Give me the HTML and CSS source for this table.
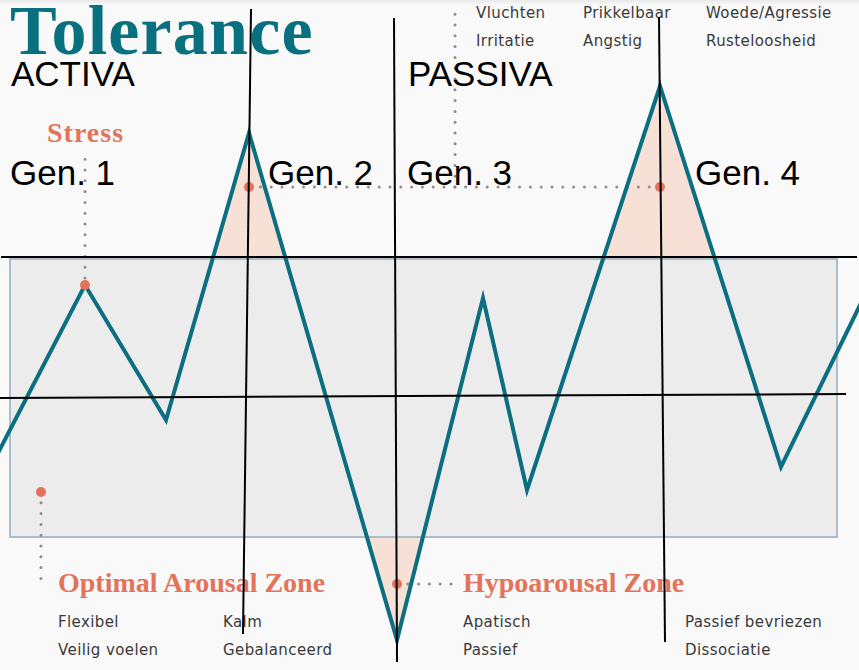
FILE: index.html
```html
<!DOCTYPE html>
<html lang="nl">
<head>
<meta charset="utf-8">
<title>Tolerance</title>
<link rel="stylesheet" href="styles.css">
</head>
<body>
<main class="canvas">
  <svg class="layer" width="859" height="670" viewBox="0 0 859 670" aria-hidden="true">
    <rect x="10" y="259" width="827" height="278" fill="#ececec" stroke="#aabdcc" stroke-width="2"/>
    <g fill="#f7e0d5">
      <polygon points="213,258 249,133 285.5,258"/>
      <polygon points="603.4,258 660,86 714.6,258"/>
      <polygon points="367,538 397,640 422.9,538"/>
    </g>
    <g stroke="#8d8d8d" stroke-width="3" stroke-linecap="round" stroke-dasharray="0 10.8" fill="none">
      <line x1="85" y1="278" x2="85" y2="152"/>
      <line x1="660" y1="187" x2="249" y2="187"/>
      <line x1="455" y1="187" x2="455" y2="6"/>
      <line x1="41" y1="492" x2="41" y2="588"/>
      <line x1="397" y1="584" x2="457" y2="584"/>
    </g>
    <polyline points="-2,453 85,285 166,420 249,133 397,640 483,298 527,490 660,86 781,467 861,303" fill="none" stroke="#0b6e81" stroke-width="4" stroke-linejoin="miter" stroke-miterlimit="12"/>
    <g fill="#e3735a">
      <circle cx="85" cy="285" r="5"/>
      <circle cx="249" cy="187" r="5"/>
      <circle cx="660" cy="187" r="5"/>
      <circle cx="41" cy="492" r="5"/>
      <circle cx="397" cy="584" r="5"/>
    </g>
  </svg>

  <h1 class="title">Tolerance</h1>

  <div class="phase phase-activa">ACTIVA</div>
  <div class="phase phase-passiva">PASSIVA</div>

  <div class="gen gen-1">Gen. 1</div>
  <div class="gen gen-2">Gen. 2</div>
  <div class="gen gen-3">Gen. 3</div>
  <div class="gen gen-4">Gen. 4</div>

  <h2 class="zone-title stress">Stress</h2>

  <ul class="traits traits-stress">
    <li>Vluchten</li>
    <li>Prikkelbaar</li>
    <li>Woede/Agressie</li>
    <li>Irritatie</li>
    <li>Angstig</li>
    <li>Rusteloosheid</li>
  </ul>

  <section class="zone zone-optimal">
    <h2 class="zone-title">Optimal Arousal Zone</h2>
    <ul class="traits traits-optimal">
      <li>Flexibel</li>
      <li>Kalm</li>
      <li>Veilig voelen</li>
      <li>Gebalanceerd</li>
    </ul>
  </section>

  <section class="zone zone-hypo">
    <h2 class="zone-title">Hypoarousal Zone</h2>
    <ul class="traits traits-hypo">
      <li>Apatisch</li>
      <li>Passief bevriezen</li>
      <li>Passief</li>
      <li>Dissociatie</li>
    </ul>
  </section>

  <svg class="layer overlay" width="859" height="670" viewBox="0 0 859 670" aria-hidden="true">
    <g stroke="#000" stroke-width="2" fill="none">
      <line x1="1" y1="257" x2="857" y2="257"/>
      <line x1="0" y1="398" x2="846" y2="394"/>
      <line x1="251" y1="9" x2="243" y2="634"/>
      <line x1="394" y1="18" x2="397" y2="662"/>
      <line x1="659" y1="17" x2="665" y2="642"/>
    </g>
  </svg>
</main>
</body>
</html>
```

FILE: styles.css
```css
* {
  box-sizing: border-box;
}

html, body {
  margin: 0;
  padding: 0;
}

body {
  width: 859px;
  height: 670px;
  overflow: hidden;
  background: linear-gradient(#e9e9e9 0, #f9f9f9 5px, #f9f9f9 100%);
}

.canvas {
  position: relative;
  width: 859px;
  height: 670px;
}

.layer {
  position: absolute;
  left: 0;
  top: 0;
  display: block;
}

.overlay {
  pointer-events: none;
}

.title {
  position: absolute;
  left: 10px;
  top: 4px;
  margin: 0;
  font-family: "Liberation Serif", "DejaVu Serif", serif;
  font-weight: 700;
  font-size: 70px;
  line-height: 54px;
  letter-spacing: 1.2px;
  color: #08707f;
}

.phase,
.gen {
  position: absolute;
  font-family: "Liberation Sans", Arial, sans-serif;
  font-size: 35px;
  line-height: 28px;
  color: #000;
  white-space: nowrap;
}

.phase { top: 60px; }
.phase-activa { left: 11px; }
.phase-passiva { left: 408px; }

.gen { top: 159px; }
.gen-1 { left: 10px; }
.gen-2 { left: 268px; }
.gen-3 { left: 407px; }
.gen-4 { left: 695px; }

.zone-title {
  margin: 0;
  font-family: "Liberation Serif", "DejaVu Serif", serif;
  font-weight: 700;
  font-size: 28px;
  line-height: 28px;
  color: #e3735a;
  white-space: nowrap;
}

.stress {
  position: absolute;
  left: 47px;
  top: 119px;
  letter-spacing: 1px;
}

.zone {
  position: absolute;
  top: 569px;
}

.zone-optimal { left: 58px; }
.zone-hypo { left: 463px; }

.zone .zone-title {
  margin-bottom: 11px;
}

.traits {
  list-style: none;
  margin: 0;
  padding: 0;
  display: grid;
  grid-auto-rows: 28px;
  font-family: "DejaVu Sans", "Noto Sans", sans-serif;
  font-size: 15px;
  line-height: 28px;
  letter-spacing: 0.4px;
  color: #3a3a3a;
  white-space: nowrap;
}

.traits-stress {
  position: absolute;
  left: 476px;
  top: -1px;
  grid-template-columns: 107px 123px auto;
}

.traits-optimal {
  grid-template-columns: 165px auto;
}

.traits-hypo {
  grid-template-columns: 222px auto;
}
```
